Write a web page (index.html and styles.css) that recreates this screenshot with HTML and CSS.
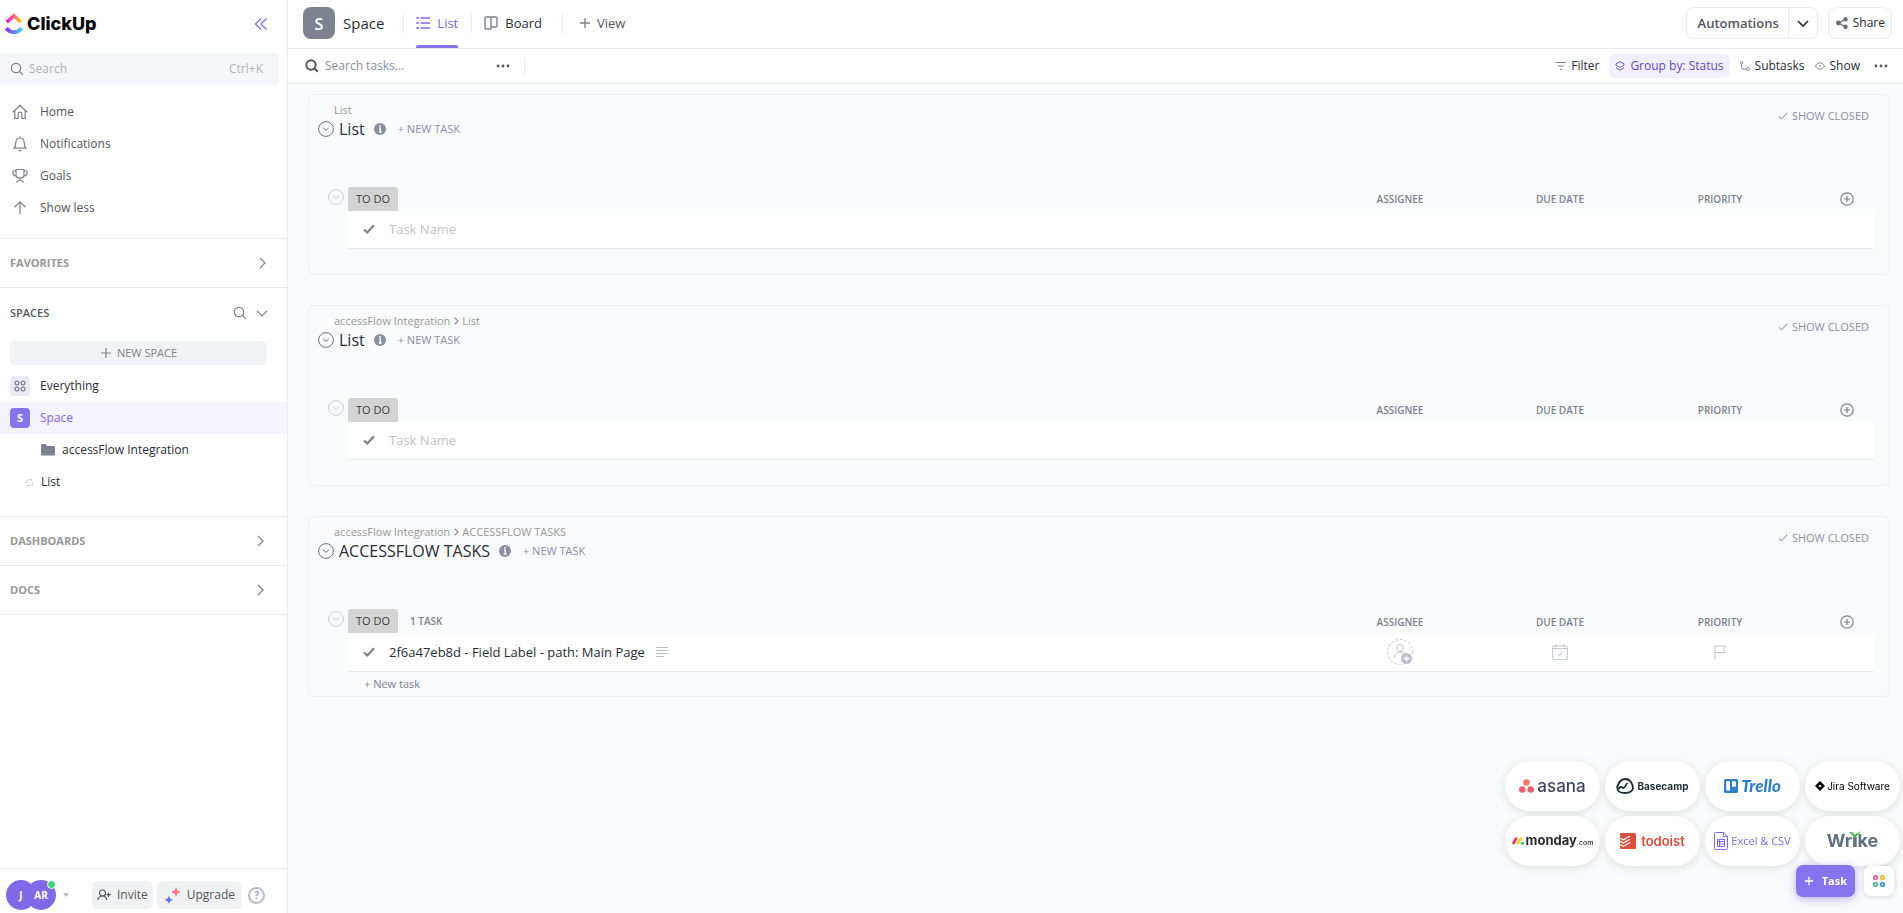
FILE: index.html
```
<!DOCTYPE html>
<html lang="en">
<head>
	<meta charset="utf-8">
	<title>Space | List</title>
	<link rel="stylesheet" href="styles.css">
</head>
<body>
	<!-- shared icons -->
	<svg class="sprite" aria-hidden="true">
		<symbol id="i-search" viewBox="0 0 14 14"><circle cx="6" cy="6" r="4.7"/><path d="M9.5 9.5l3.3 3.3"/></symbol>
		<symbol id="i-right" viewBox="0 0 12 12"><path d="M4 1l5 5-5 5"/></symbol>
		<symbol id="i-down" viewBox="0 0 12 12"><path d="M1 4l5 5 5-5"/></symbol>
		<symbol id="i-plus" viewBox="0 0 12 12"><path d="M6 1v10M1 6h10"/></symbol>
		<symbol id="i-toggle" viewBox="0 0 16 16"><circle cx="8" cy="8" r="7.4"/><path d="M5.2 6.8L8 9.4l2.8-2.6"/></symbol>
		<symbol id="i-info" viewBox="0 0 12 12"><circle cx="6" cy="6" r="6" fill="#87909e" stroke="none"/><path d="M5 5.2h1.3v3.6M4.8 9h2.8" stroke="#fff" stroke-width="1.3"/><circle cx="6" cy="3" r=".9" fill="#fff" stroke="none"/></symbol>
		<symbol id="i-tick" viewBox="0 0 12 12"><path d="M1 6.5l3.3 3L11 2.2"/></symbol>
		<symbol id="i-add" viewBox="0 0 14 14"><circle cx="7" cy="7" r="6.2"/><path d="M7 4v6M4 7h6"/></symbol>
		<symbol id="i-dots" viewBox="0 0 14 4"><g fill="currentColor" stroke="none"><circle cx="2" cy="2" r="1.4"/><circle cx="7" cy="2" r="1.4"/><circle cx="12" cy="2" r="1.4"/></g></symbol>
	</svg>

	<div class="app">
		<aside class="sidebar">
			<div class="brand">
				<svg class="brand-mark" viewBox="0 0 18 22">
					<defs>
						<linearGradient id="g-top"><stop offset="0" stop-color="#ff02f0"/><stop offset=".5" stop-color="#ff6a7a"/><stop offset="1" stop-color="#ffc800"/></linearGradient>
						<linearGradient id="g-bottom"><stop offset="0" stop-color="#8930fd"/><stop offset="1" stop-color="#49ccf9"/></linearGradient>
					</defs>
					<path d="M1.8 9.3L9 2.6l7.2 6.7" fill="none" stroke="url(#g-top)" stroke-width="3.6"/>
					<path d="M1.4 15.2c4.4 5.4 10.8 5.4 15.2 0" fill="none" stroke="url(#g-bottom)" stroke-width="3.8"/>
				</svg>
				<span class="brand-name">ClickUp</span>
				<button class="icon-btn collapse" aria-label="Collapse sidebar">
					<svg class="icon s14" viewBox="0 0 14 14"><path d="M7 1.5L1.5 7 7 12.5M12.5 1.5L7 7l5.5 5.5"/></svg>
				</button>
			</div>
			<label class="search">
				<svg class="icon s14"><use href="#i-search"/></svg>
				<input type="text" placeholder="Search" aria-label="Search">
				<span>Ctrl+K</span>
			</label>
			<nav class="nav">
				<a href="#"><svg class="icon s16" viewBox="0 0 16 16"><path d="M.8 8.2L8 1.3l7.2 6.9M2.8 6.8v7.5h3.4V10c0-2.4 3.6-2.4 3.6 0v4.3h3.4V6.8"/></svg>Home</a>
				<a href="#"><svg class="icon s16" viewBox="0 0 16 16"><path d="M8 .5v1.2M2.2 12.2c1.6-1.5 1.2-3.6 1.6-6 .8-5.6 7.6-5.6 8.4 0 .4 2.4 0 4.5 1.6 6zM6.5 14.7h3"/></svg>Notifications</a>
				<a href="#"><svg class="icon s16" viewBox="0 0 16 16"><path d="M4 1.500h8v5c0 4.800-8 4.800-8 0zM4 3H1v2.500C1 7.300 2.500 8 4.300 8M12 3h3v2.500c0 1.800-1.500 2.500-3.300 2.500M8 10.200V12M4.500 14.500c.8-3 6.200-3 7 0"/></svg>Goals</a>
				<a href="#"><svg class="icon s16" viewBox="0 0 16 16"><path d="M8 14V2M2.5 7.2L8 1.8l5.5 5.4"/></svg>Show less</a>
			</nav>
			<button class="section">FAVORITES <svg class="icon s12"><use href="#i-right"/></svg></button>
			<div class="spaces">
				<div class="spaces-head">
					<h2>SPACES</h2>
					<button class="icon-btn" aria-label="Search spaces"><svg class="icon s14"><use href="#i-search"/></svg></button>
					<button class="icon-btn" aria-label="Hide spaces"><svg class="icon s12"><use href="#i-down"/></svg></button>
				</div>
				<button class="new-space"><svg class="icon s12"><use href="#i-plus"/></svg>NEW SPACE</button>
				<nav class="tree">
					<a href="#"><span class="tile grey"><svg class="icon s12" viewBox="0 0 12 12"><circle cx="3" cy="3" r="1.9"/><circle cx="9" cy="3" r="1.9"/><circle cx="3" cy="9" r="1.9"/><circle cx="9" cy="9" r="1.9"/></svg></span>Everything</a>
					<a href="#" class="active"><span class="tile">S</span>Space</a>
					<a href="#" class="folder"><svg class="folder-icon" viewBox="0 0 14 12"><path d="M0 1.5C0 .5.5 0 1.5 0h3l2 2h6c1 0 1.500.5 1.500 1.500v6.500c0 1-.5 1.500-1.500 1.500h-11C.5 11.500 0 11 0 10z"/></svg>accessFlow Integration</a>
					<a href="#" class="list"><span class="ring"></span>List</a>
				</nav>
			</div>
			<button class="section inset">DASHBOARDS <svg class="icon s12"><use href="#i-right"/></svg></button>
			<button class="section inset">DOCS <svg class="icon s12"><use href="#i-right"/></svg></button>
			<footer class="foot">
				<button class="avatars" aria-label="Account">
					<span class="avatar">J</span>
					<span class="avatar second">AR<i class="online"></i></span>
					<i class="caret"></i>
				</button>
				<button class="foot-btn"><svg class="icon s14 dark" viewBox="0 0 14 14"><circle cx="5.5" cy="5" r="3"/><path d="M.8 12c.4-2.700 2-4 4.700-4s3.800 1.300 4.300 4M11.500 4.500v4.400M9.300 6.700h4.400"/></svg>Invite</button>
				<button class="foot-btn upgrade">
					<svg class="spark" viewBox="0 0 16 17">
						<defs>
							<linearGradient id="g-a"><stop offset="0" stop-color="#fd4bc0"/><stop offset="1" stop-color="#ff9a3c"/></linearGradient>
							<linearGradient id="g-b"><stop offset="0" stop-color="#8034fd"/><stop offset="1" stop-color="#49b8f9"/></linearGradient>
						</defs>
						<path fill="url(#g-a)" d="M11 0l1.400 3.600L16 5l-3.600 1.400L11 10 9.600 6.400 6 5l3.600-1.400z"/>
						<path fill="url(#g-b)" d="M4 8.500l1.200 3.100L8.300 13l-3.100 1.200L4 17l-1.200-2.800L-.3 13l3.100-1.400z"/>
					</svg>Upgrade</button>
				<button class="help" aria-label="Help">?</button>
			</footer>
		</aside>

		<main class="main">
			<header class="topbar">
				<span class="space-tile">S</span>
				<h1>Space</h1>
				<nav class="views">
					<a href="#" class="active"><svg class="icon s14" viewBox="0 0 14 14"><path d="M4.5 2H14M4.5 7H14M4.5 12H14"/><path d="M.5 2h2M.5 7h2M.5 12h2" stroke-width="2"/></svg>List</a>
					<a href="#"><svg class="icon s14" viewBox="0 0 14 14"><path d="M2.200 1h9.600c.8 0 1.200.4 1.200 1.200v7.600c0 .8-.4 1.200-1.200 1.200H7v1.200c0 .5-.3.8-.8.8h-4c-.8 0-1.200-.4-1.200-1.200v-10C1 1.400 1.400 1 2.200 1zM7 1v10"/></svg>Board</a>
					<button class="add-view"><svg class="icon s12"><use href="#i-plus"/></svg>View</button>
				</nav>
				<div class="split">
					<button>Automations</button>
					<button class="split-arrow" aria-label="More automations"><svg class="icon s12"><use href="#i-down"/></svg></button>
				</div>
				<button class="share"><svg class="icon s12" viewBox="0 0 12 12"><path d="M10 2L2.500 6l7.500 4"/><g fill="currentColor" stroke="none"><circle cx="9.500" cy="2.200" r="2.200"/><circle cx="2.400" cy="6" r="2.400"/><circle cx="9.500" cy="9.800" r="2.200"/></g></svg>Share</button>
			</header>

			<div class="toolbar">
				<label class="task-search">
					<svg class="icon s14"><use href="#i-search"/></svg>
					<input type="text" placeholder="Search tasks..." aria-label="Search tasks">
				</label>
				<button class="icon-btn dots" aria-label="Search options"><svg class="icon"><use href="#i-dots"/></svg></button>
				<div class="tools">
					<button><svg class="icon s10" viewBox="0 0 10 10"><path d="M0 1.500h10M2 5h6M4 8.500h2"/></svg>Filter</button>
					<button class="group"><svg class="icon s10" viewBox="0 0 10 10"><path d="M5 .6l4 2.200v1.400L5 6.400 1 4.200V2.800zM1 6.800l4 2.400 4-2.400"/></svg>Group by: Status</button>
					<button><svg class="icon s10" viewBox="0 0 10 10"><circle cx="1.600" cy="1.600" r="1.200"/><path d="M1.600 2.800v3c0 1.700.7 2.400 2.400 2.400h2.200"/><rect x="6.600" y="6.600" width="2.800" height="2.800" rx="1"/></svg>Subtasks</button>
					<button><svg class="icon s10" viewBox="0 0 10 10"><path d="M.5 5C2.500.8 7.500.8 9.500 5 7.500 9.200 2.500 9.200.5 5z"/><circle cx="5" cy="5" r=".5"/></svg>Show</button>
					<button class="dots" aria-label="More options"><svg class="icon"><use href="#i-dots"/></svg></button>
				</div>
			</div>

			<div class="content">
				<section class="card">
					<button class="show-closed"><svg class="icon s10"><use href="#i-tick"/></svg>SHOW CLOSED</button>
					<p class="crumbs"><a href="#">List</a></p>
					<div class="card-title">
						<button class="toggle" aria-label="Collapse list"><svg class="icon s16"><use href="#i-toggle"/></svg></button>
						<h2>List</h2>
						<svg class="icon s12 info"><use href="#i-info"/></svg>
						<button class="new-task">+ NEW TASK</button>
					</div>
					<div class="group-row">
						<button class="toggle pale" aria-label="Collapse group"><svg class="icon s16"><use href="#i-toggle"/></svg></button>
						<table class="tasks">
							<thead>
								<tr><th class="name"><span class="status">TO DO</span></th><th class="col">ASSIGNEE</th><th class="col">DUE DATE</th><th class="col">PRIORITY</th><th class="plus"><button class="icon-btn" aria-label="Add column"><svg class="icon s14"><use href="#i-add"/></svg></button></th></tr>
							</thead>
							<tbody>
								<tr><td colspan="5"><div class="cell"><svg class="icon s12 done"><use href="#i-tick"/></svg><input type="text" placeholder="Task Name" aria-label="Task name"></div></td></tr>
							</tbody>
						</table>
					</div>
				</section>

				<section class="card">
					<button class="show-closed"><svg class="icon s10"><use href="#i-tick"/></svg>SHOW CLOSED</button>
					<p class="crumbs"><a href="#">accessFlow Integration</a><svg class="icon s8"><use href="#i-right"/></svg><a href="#">List</a></p>
					<div class="card-title">
						<button class="toggle" aria-label="Collapse list"><svg class="icon s16"><use href="#i-toggle"/></svg></button>
						<h2>List</h2>
						<svg class="icon s12 info"><use href="#i-info"/></svg>
						<button class="new-task">+ NEW TASK</button>
					</div>
					<div class="group-row">
						<button class="toggle pale" aria-label="Collapse group"><svg class="icon s16"><use href="#i-toggle"/></svg></button>
						<table class="tasks">
							<thead>
								<tr><th class="name"><span class="status">TO DO</span></th><th class="col">ASSIGNEE</th><th class="col">DUE DATE</th><th class="col">PRIORITY</th><th class="plus"><button class="icon-btn" aria-label="Add column"><svg class="icon s14"><use href="#i-add"/></svg></button></th></tr>
							</thead>
							<tbody>
								<tr><td colspan="5"><div class="cell"><svg class="icon s12 done"><use href="#i-tick"/></svg><input type="text" placeholder="Task Name" aria-label="Task name"></div></td></tr>
							</tbody>
						</table>
					</div>
				</section>

				<section class="card">
					<button class="show-closed"><svg class="icon s10"><use href="#i-tick"/></svg>SHOW CLOSED</button>
					<p class="crumbs"><a href="#">accessFlow Integration</a><svg class="icon s8"><use href="#i-right"/></svg><a href="#">ACCESSFLOW TASKS</a></p>
					<div class="card-title">
						<button class="toggle" aria-label="Collapse list"><svg class="icon s16"><use href="#i-toggle"/></svg></button>
						<h2>ACCESSFLOW TASKS</h2>
						<svg class="icon s12 info"><use href="#i-info"/></svg>
						<button class="new-task">+ NEW TASK</button>
					</div>
					<div class="group-row">
						<button class="toggle pale" aria-label="Collapse group"><svg class="icon s16"><use href="#i-toggle"/></svg></button>
						<table class="tasks">
							<thead>
								<tr><th class="name"><span class="status">TO DO</span><span class="count">1 TASK</span></th><th class="col">ASSIGNEE</th><th class="col">DUE DATE</th><th class="col">PRIORITY</th><th class="plus"><button class="icon-btn" aria-label="Add column"><svg class="icon s14"><use href="#i-add"/></svg></button></th></tr>
							</thead>
							<tbody>
								<tr>
									<td><div class="cell"><svg class="icon s12 done"><use href="#i-tick"/></svg><a href="#">2f6a47eb8d - Field Label - path: Main Page</a><svg class="icon s12 lines" viewBox="0 0 12 12"><path d="M0 1.500h12M0 4.500h12M0 7.500h12M0 10.500h8"/></svg></div></td>
									<td class="col"><button class="field" aria-label="Assign"><svg class="icon assignee" viewBox="0 0 28 28"><circle cx="14" cy="14" r="12.500" stroke-dasharray="2.500 2"/><circle cx="14" cy="10" r="3.500"/><path d="M8.500 20c0-8 11-8 11-1"/><circle cx="20.500" cy="20.500" r="5.500" fill="#b9bec7" stroke="none"/><path d="M20.500 17.500v6M17.500 20.500h6" stroke="#fff" stroke-width="1.500"/></svg></button></td>
									<td class="col"><button class="field" aria-label="Set due date"><svg class="icon s16" viewBox="0 0 16 16"><rect x=".6" y="1.800" width="14.800" height="13.600" rx="1.500"/><path d="M.6 4.500h14.800M4 0v3M12 0v3M5.500 9.800l2 1.700 3-3.500"/></svg></button></td>
									<td class="col"><button class="field" aria-label="Set priority"><svg class="icon s16" viewBox="0 0 16 16"><path d="M3 16V1.500M3 2h10.500L11.300 5l2.200 3.500H3"/></svg></button></td>
									<td></td>
								</tr>
							</tbody>
						</table>
					</div>
					<button class="add-row">+ New task</button>
				</section>
			</div>
		</main>
	</div>

	<!-- floating import buttons -->
	<div class="imports">
		<button class="pill asana"><svg width="15" height="14" viewBox="0 0 15 14"><g fill="#f4606c"><circle cx="7.500" cy="3.500" r="3.300" fill="#f8776a"/><circle cx="3.300" cy="10.500" r="3.300"/><circle cx="11.700" cy="10.500" r="3.300"/></g></svg>asana</button>
		<button class="pill basecamp"><svg width="18" height="16" viewBox="0 0 18 16"><path d="M1 9.500C2.500 4 6 1 9.500 1c4.500 0 7.500 5 7.500 9.500-1 3.500-4 4.500-8 4.500-4 0-6.500-1-7.500-3.500 1.500-1 2.300-2.500 3.500-2.500s1.500 1 2.500 1S9.500 7.500 11 5.500" fill="none" stroke="#1d2d35" stroke-width="1.800" stroke-linecap="round"/></svg>Basecamp</button>
		<button class="pill trello"><svg width="14" height="14" viewBox="0 0 14 14"><rect width="14" height="14" rx="1.500" fill="#2f7fcb"/><path d="M2.200 2.200h3.800v9.400H2.200zM8 2.200h3.800v5.600H8z" fill="#fff"/></svg>Trello</button>
		<button class="pill jira"><svg width="10" height="10" viewBox="0 0 10 10"><path d="M5 0l5 5-5 5-5-5z"/><path d="M5 3.500L6.500 5 5 6.500 3.500 5z" fill="#fff"/></svg>Jira Software</button>
		<button class="pill monday"><svg width="12" height="8" viewBox="0 0 12 8"><path d="M1.500 6.200L4.200 1.600" stroke="#f62b54" stroke-width="2.600" stroke-linecap="round"/><path d="M6 6.200l2.700-4.600" stroke="#fc0" stroke-width="2.600" stroke-linecap="round"/><circle cx="10.500" cy="6.200" r="1.500" fill="#00ca72"/></svg><span>monday<small>.com</small></span></button>
		<button class="pill todoist"><svg width="16" height="16" viewBox="0 0 16 16"><rect width="16" height="16" rx="1.500" fill="#de4c3a"/><path d="M0 5l3.500 1.800L10 3M0 8.300l3.500 1.800L10 6.300M0 11.600l3.500 1.800L10 9.600" fill="none" stroke="#fff" stroke-width="1.200"/></svg>todoist</button>
		<button class="pill excel"><svg width="14" height="18" viewBox="0 0 14 18" fill="none" stroke="#7b68ee"><path d="M9.500.5h-8c-.7 0-1 .3-1 1v15c0 .7.300 1 1 1h11c.7 0 1-.3 1-1V4.500zM9.500.5v4h4M3.500 7.500h7v7h-7zM3.500 9.500h7M5.500 7.500v7M5.500 12h5"/></svg>Excel &amp; CSV</button>
		<button class="pill wrike"><span>Wr<b class="wrike-i">ı<svg width="12" height="7" viewBox="0 0 12 7"><path d="M0 1l3.500.3L5.500 4 12 0 6 7z" fill="#3fb53f"/></svg></b>ke</span></button>
	</div>
	<div class="quick">
		<button class="quick-task"><svg class="icon s10"><use href="#i-plus"/></svg>Task</button>
		<button class="quick-apps" aria-label="Apps"><svg width="12" height="12" viewBox="0 0 12 12" fill="none" stroke-width="1.600"><circle cx="2.500" cy="2.500" r="1.700" stroke="#e8578f"/><circle cx="9.500" cy="2.500" r="1.700" stroke="#f2b01e"/><circle cx="2.500" cy="9.500" r="1.700" stroke="#3fb085"/><circle cx="9.500" cy="9.500" r="1.700" stroke="#2f86e0"/></svg></button>
	</div>
</body>
</html>
```

FILE: styles.css
```
* {margin:0; padding:0; box-sizing:border-box;}
body{
	font-family:"Open Sans","Noto Sans",sans-serif;
	font-size:13px;
	line-height:16px;
	color:#292d34;
	background:#fafbfd;
}
a{color:inherit; text-decoration:none;}
button,input{
	font:inherit;
	color:inherit;
	border:0;
	background:none;
	outline:none;
}
button{cursor:pointer; white-space:nowrap;}
h1,h2{font-weight:500;}

.sprite{position:absolute; width:0; height:0;}
.icon{
	fill:none;
	stroke:currentColor;
	stroke-width:1.2;
	flex:none;
	color:#7c828d;
}
.s8{width:8px; height:8px;}
.s10{width:10px; height:10px;}
.s12{width:12px; height:12px;}
.s14{width:14px; height:14px;}
.s16{width:16px; height:16px;}
.dark{color:#54575d;}
.icon-btn{display:flex; align-items:center;}

.app{display:flex; min-height:100vh;}

/* sidebar */
.sidebar{
	width:288px;
	flex:none;
	display:flex;
	flex-direction:column;
	background:#fff;
	border-right:1px solid #e9ebf0;
}
.brand{
	display:flex;
	align-items:center;
	height:48px;
	padding:0 19px 0 5px;
}
.brand-mark{width:18px; height:22px;}
.brand-name{
	font-family:Inter,sans-serif;
	font-size:18px;
	font-weight:800;
	color:#000;
	margin-left:4px;
}
.collapse{margin-left:auto;}
.collapse .icon{color:#7b68ee;}
.search{
	display:flex;
	align-items:center;
	gap:5px;
	height:32px;
	margin:5px 8px 0 0;
	padding:0 16px 0 10px;
	background:#f5f6f9;
	border-radius:0 5px 5px 0;
	font-size:12px;
	color:#adb3bd;
}
.search input{flex:1; min-width:0;}
input::placeholder{color:inherit; opacity:1;}
.nav{
	padding:11px 0 14px;
	border-bottom:1px solid #e9ebf0;
	font-size:12px;
}
.nav a{
	display:flex;
	align-items:center;
	gap:12px;
	height:32px;
	padding:0 12px;
	color:#54575d;
}
.section{
	display:flex;
	align-items:center;
	justify-content:space-between;
	height:49px;
	padding:0 19px 0 10px;
	border-bottom:1px solid #e9ebf0;
	font-size:11px;
	font-weight:700;
	color:#979797;
}
.inset{padding-right:21px;}
.spaces{border-bottom:1px solid #e9ebf0; padding-bottom:18px;}
.spaces-head{
	display:flex;
	align-items:center;
	gap:9px;
	height:50px;
	padding:0 19px 0 10px;
}
.spaces-head h2{
	flex:1;
	font-size:11px;
	font-weight:600;
	color:#54575d;
}
.new-space{
	display:flex;
	align-items:center;
	justify-content:center;
	gap:5px;
	width:257px;
	height:24px;
	margin:3px 10px 5px;
	background:#f2f3f7;
	border-radius:5px;
	font-size:11px;
	font-weight:500;
	color:#7c828d;
}
.tree{font-size:12px;}
.tree a{
	display:flex;
	align-items:center;
	gap:10px;
	height:32px;
	padding:0 10px;
}
.tree a.active{background:#f5f3ff; color:#7b68ee; font-weight:500;}
.tile{
	display:flex;
	align-items:center;
	justify-content:center;
	width:20px;
	height:20px;
	border-radius:4px;
	background:#8475ee;
	color:#fff;
	font-size:11px;
	font-weight:700;
}
.tile.grey{background:#e9ebf0;}
.tree a.folder{padding-left:41px; gap:7px;}
.folder-icon{width:14px; height:12px; fill:#7c828d;}
.tree a.list{padding-left:26px; gap:8px;}
.ring{width:7px; height:7px; border:1px dashed #b9bec7; border-radius:50%;}
.foot{
	display:flex;
	align-items:center;
	gap:4px;
	height:45px;
	margin-top:auto;
	padding:8px 6px 0;
	border-top:1px solid #e9ebf0;
}
.avatars{display:flex; align-items:center; margin-right:19px;}
.avatar{
	position:relative;
	width:30px;
	height:30px;
	border-radius:50%;
	background:#8168e8;
	color:#fff;
	font-size:10px;
	font-weight:700;
	line-height:30px;
}
.second{margin-left:-10px;}
.online{
	position:absolute;
	top:0;
	right:0;
	width:9px;
	height:9px;
	border:1px solid #fff;
	border-radius:50%;
	background:#3fd072;
}
.caret{
	margin-left:7px;
	border:3px solid transparent;
	border-top:4px solid #b9bec7;
	border-bottom:0;
}
.foot-btn{
	display:flex;
	align-items:center;
	gap:6px;
	height:28px;
	padding:0 5px;
	border-radius:6px;
	background:#f0f1f3;
	font-size:12px;
	color:#54575d;
}
.upgrade{padding:0 7px 0 8px;}
.spark{width:16px; height:17px;}
.help{
	width:17px;
	height:17px;
	margin-left:2px;
	border:2px solid #b9bec7;
	border-radius:50%;
	font-size:10px;
	font-weight:700;
	line-height:12px;
	color:#a5abb5;
}

/* main column */
.main{flex:1; min-width:0;}
.topbar{
	display:flex;
	align-items:center;
	height:49px;
	padding:0 11px 2px 15px;
	background:#fff;
	border-bottom:1px solid #e9ebf0;
}
.space-tile{
	width:32px;
	height:32px;
	margin-right:8px;
	border-radius:8px;
	background:#7c828d;
	color:#fff;
	font-size:16px;
	font-weight:600;
	line-height:34px;
	text-align:center;
}
.topbar h1{font-size:15px; line-height:20px;}
.views{display:flex; align-items:center; flex:1; margin-left:19px;}
.views a,.add-view{
	display:flex;
	align-items:center;
	gap:7px;
	height:20px;
	padding:0 13px 0 12px;
	border-left:1px solid #e9ebf0;
	font-weight:500;
}
.views a + a{padding-right:20px;}
.views .add-view{padding-left:16px; gap:6px; font-weight:400; color:#54575d;}
.views .icon{stroke-width:1.4;}
.views a.active{position:relative; color:#7b68ee;}
.views a.active .icon{color:#7b68ee;}
.views a.active::after{
	content:"";
	position:absolute;
	left:12px;
	right:13px;
	bottom:-15px;
	height:3px;
	border-radius:2px 2px 0 0;
	background:#8475ee;
}
.split,.share{
	display:flex;
	align-items:center;
	height:32px;
	border:1px solid #e9ebf0;
	border-radius:8px;
}
.split{margin-right:10px; color:#54575d; font-weight:600;}
.split button{height:30px; padding:0 9px 0 11px;}
.split .split-arrow{padding:0 8px; border-left:1px solid #e9ebf0;}
.split-arrow .icon{display:block; color:#292d34; stroke-width:1.6;}
.share{gap:5px; padding:0 6px 0 7px; font-size:12px;}
.share .icon{color:#656f7d;}
.toolbar{
	display:flex;
	align-items:center;
	height:35px;
	padding:0 15px 0 17px;
	background:#fff;
	border-bottom:1px solid #e9ebf0;
	font-size:12px;
}
.task-search{display:flex; align-items:center; gap:6px; color:#87909e;}
.task-search input{width:171px;}
.task-search .icon{color:#54575d; stroke-width:2;}
.dots .icon{width:14px; height:4px; color:#54575d;}
.icon-btn.dots{padding-right:14px; border-right:1px solid #e9ebf0; height:16px;}
.tools{display:flex; align-items:center; gap:10px; margin-left:auto;}
.tools button{display:flex; align-items:center; gap:5px; height:24px;}
.tools .icon{stroke-width:1;}
.tools .group{
	padding:0 6px;
	border-radius:6px;
	background:#f2f0fe;
	color:#5f48c6;
}
.tools .group .icon{color:#6b57d8;}
.tools .dots{margin-left:4px;}

.content{
	display:flex;
	flex-direction:column;
	gap:30px;
	padding:10px 13px 30px 20px;
}
.card{
	position:relative;
	min-height:181px;
	padding:7px 15px 0 9px;
	border:1px solid #eff0f3;
	border-radius:6px;
}
.show-closed{
	position:absolute;
	top:13px;
	right:20px;
	display:flex;
	align-items:center;
	gap:4px;
	font-size:11px;
	color:#87909e;
}
.crumbs{
	display:flex;
	align-items:center;
	gap:2px;
	height:16px;
	padding-left:16px;
	font-size:11px;
	color:#979797;
}
.crumbs .icon{stroke-width:1.6;}
.card-title{display:flex; align-items:center; height:22px;}
.card-title h2{margin:0 9px 0 5px; font-size:16px; line-height:22px;}
.toggle{display:flex; height:16px;}
.toggle .icon{color:#656f7d; stroke-width:1;}
.pale .icon{color:#c8cbd1;}
.new-task{margin-left:12px; font-size:11px; color:#87909e;}
.group-row{
	display:flex;
	gap:4px;
	margin-top:47px;
	padding-left:10px;
}
.group-row .toggle{margin-top:2px;}
.tasks{flex:1; border-collapse:collapse; table-layout:fixed;}
.tasks th{
	height:24px;
	font-size:10px;
	font-weight:600;
	color:#7c828d;
}
.tasks .name{text-align:left;}
.col{width:160px; text-align:center;}
.plus{width:74px;}
.plus .icon-btn{margin-left:40px;}
.status{
	display:inline-block;
	height:24px;
	padding:0 8px;
	border-radius:3px 3px 0 0;
	background:#d3d3d3;
	color:#3c3f45;
	font-size:11px;
	font-weight:400;
	line-height:24px;
	vertical-align:top;
}
.count{padding-left:12px; line-height:25px;}
.tasks td{
	height:37px;
	background:#fff;
	border-bottom:1px solid #e9ebf0;
	vertical-align:middle;
}
.cell{display:flex; align-items:center; padding-left:15px; gap:14px;}
.cell input{flex:1; color:#c0c3c9;}
.cell .done{stroke-width:2.2;}
.cell .lines{margin-left:-3px; color:#b9bec7;}
.field{display:block; margin:0 auto;}
.field .icon{display:block; color:#c0c4cc; stroke-width:1;}
.assignee{width:28px; height:28px;}
.add-row{
	display:block;
	margin-left:46px;
	height:24px;
	font-size:11px;
	color:#7c828d;
}

/* floating buttons */
.imports{
	position:fixed;
	right:3px;
	bottom:47px;
	display:grid;
	grid-template-columns:repeat(4,95px);
	gap:5px;
}
.pill{
	display:flex;
	align-items:center;
	justify-content:center;
	gap:3px;
	height:50px;
	border-radius:25px;
	background:#fff;
	box-shadow:0 2px 8px rgba(0,0,0,0.12);
	font-family:Inter,sans-serif;
	font-size:10px;
	color:#000;
}
.asana{font-size:17px; font-weight:500; color:#3a4560;}
.basecamp{font-weight:700; color:#1d2d35;}
.trello{font-family:Lato,sans-serif; font-size:17px; font-weight:900; font-style:italic; color:#2f7fcb;}
.jira{gap:2px;}
.monday{font-size:13px; font-weight:700; color:#2b2b2b; gap:2px;}
.monday small{font-size:7px; font-weight:500;}
.todoist{gap:5px; font-size:13px; font-weight:600; color:#de4c3a;}
.excel{font-family:"Open Sans",sans-serif; font-size:11px; color:#7b68ee;}
.wrike{font-size:18px; font-weight:700; color:#5f7180;}
.wrike-i{position:relative;}
.wrike-i svg{position:absolute; left:-3px; top:1px;}
.quick{
	position:fixed;
	right:9px;
	bottom:16px;
	display:flex;
	align-items:center;
	gap:9px;
}
.quick-task{
	display:flex;
	align-items:center;
	gap:8px;
	height:32px;
	padding:0 8px;
	border-radius:7px;
	background:#8475ee;
	color:#fff;
	font-size:11px;
	font-weight:700;
	box-shadow:0 2px 8px rgba(123,104,238,0.5);
}
.quick-task .icon{color:#fff; stroke-width:1.6;}
.quick-apps{
	display:flex;
	align-items:center;
	justify-content:center;
	width:30px;
	height:30px;
	border-radius:7px;
	background:#fff;
	box-shadow:0 1px 6px rgba(0,0,0,0.14);
}
```
